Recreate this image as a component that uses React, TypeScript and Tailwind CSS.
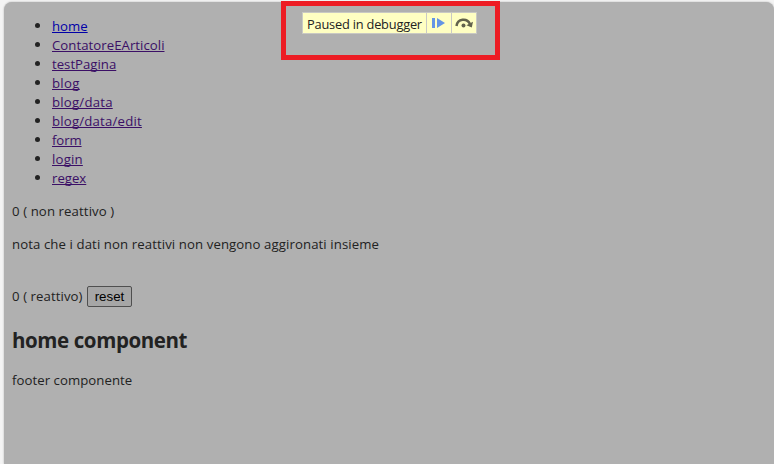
const links = [
  { label: "home", style: "text-[#0000a8] tracking-[0px]" },
  { label: "ContatoreEArticoli", style: "text-[#3b0f66] tracking-[0.04px]" },
  { label: "testPagina", style: "text-[#3b0f66] tracking-[0px]" },
  { label: "blog", style: "text-[#3b0f66] tracking-[0.3px]" },
  { label: "blog/data", style: "text-[#3b0f66] tracking-[0.22px]" },
  { label: "blog/data/edit", style: "text-[#3b0f66] tracking-[0.2px]" },
  { label: "form", style: "text-[#3b0f66] tracking-[-0.1px]" },
  { label: "login", style: "text-[#3b0f66] tracking-[0.2px]" },
  { label: "regex", style: "text-[#3b0f66] tracking-[0px]" },
];

function DebuggerBanner() {
  return (
    <div className="absolute left-[281px] top-px h-[59px] w-[219px] border-[5px] border-[#ed1c24]">
      <div className="ml-4 mt-[6px] flex h-[22px] w-[175px] border border-[#c9c9c4] bg-[#ffffc2] text-[#222]">
        <div className="w-[123px] whitespace-nowrap pl-1 pt-px text-[12.8px] leading-[21px] tracking-[-0.2px]">
          <span>Paused in debugger</span>
        </div>
        <div className="w-[25px] border-l border-[#c9c9c4]">
          <svg width="24" height="20" viewBox="0 0 24 20" fill="#6495e5">
            <path d="M5 5h3v10H5zM10 5l8 5-8 5z" />
          </svg>
        </div>
        <div className="w-[25px] border-l border-[#c9c9c4]">
          <svg width="24" height="20" viewBox="0 0 24 20">
            <path d="M4.5 13C5.5 5.5 15 4.5 18 11" fill="none" stroke="#62624c" strokeWidth="2.5" />
            <path d="M21 8.8l-1.2 5.6-5.4-2.2z" fill="#62624c" />
            <circle cx="11.5" cy="12.5" r="2" fill="#62624c" />
          </svg>
        </div>
      </div>
    </div>
  );
}

export default function App() {
  return (
    <div className="relative h-[464px] w-[774px] overflow-hidden bg-[#f4f4f4] pl-1 pt-[2px] font-['Open_Sans','Noto_Sans',sans-serif] text-[13.2px] leading-[19px] text-[#222]">
      <main className="h-[462px] w-[770px] rounded-t-[8px] bg-[#b0b0b0] pl-2 pt-[15px] shadow-[0_0_2px_#aaa]">
        <ul>
          {links.map((link) => (
            <li key={link.label} className="flex h-[19px] items-center">
              <span className="mb-[2px] ml-[23px] mr-3 size-[5px] shrink-0 rounded-full bg-[#222]" />
              <a className={`underline decoration-1 underline-offset-1 [text-decoration-skip-ink:none] ${link.style}`}>{link.label}</a>
            </li>
          ))}
        </ul>
        <p className="mt-[14px] tracking-[0.1px]"><span>0 ( non reattivo )</span></p>
        <p className="mt-[14px] tracking-[0.095px]"><span>nota che i dati non reattivi non vengono aggironati insieme</span></p>
        <div className="mt-8 flex h-[21px] items-center">
          <span className="w-[75px] whitespace-nowrap tracking-[0.08px]">0 ( reattivo)</span>
          <button className="h-[21px] w-[45px] rounded-[2px] border border-[#4f4f4f] bg-[#a6a6a6] font-['Liberation_Sans',Arial,sans-serif] text-[13.33px] leading-[18px] text-black">reset</button>
        </div>
        <h2 className="mt-[19px] text-[20.5px] font-bold leading-7 tracking-[-0.4px]"><span>home component</span></h2>
        <p className="mt-[17px] tracking-[0.05px]"><span>footer componente</span></p>
      </main>
      <DebuggerBanner />
    </div>
  );
}
